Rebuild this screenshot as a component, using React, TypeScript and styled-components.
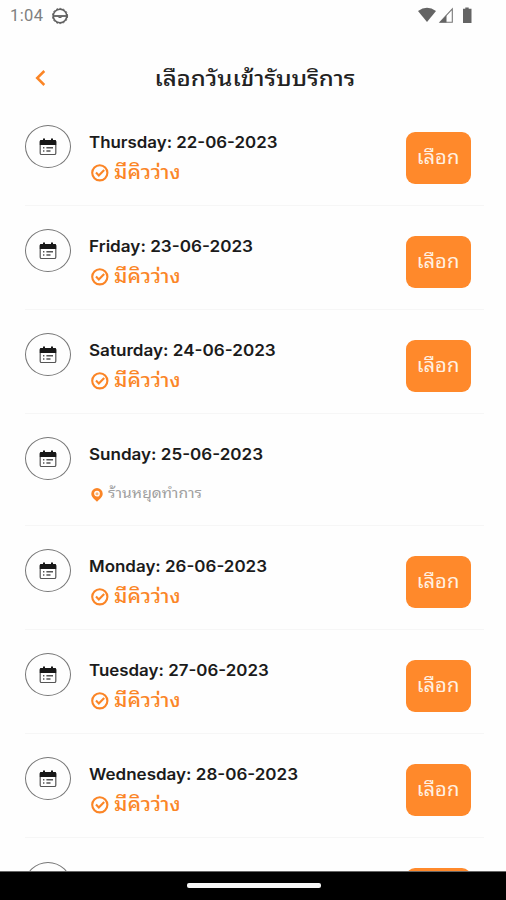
import React from 'react';
import styled, { createGlobalStyle } from 'styled-components';

const thai = 'Inter, "Noto Sans Thai Looped", "Noto Looped Thai", Loma, "Droid Sans Thai", "Noto Sans Thai", "Noto Sans", sans-serif';

const Global = createGlobalStyle`
  * { box-sizing: border-box; }
  body { margin: 0; background: #fefefe; overflow: hidden; }
`;

const Screen = styled.div`
  width: 506px;
  height: 900px;
  display: flex;
  flex-direction: column;
  overflow: hidden;
  background: #fefefe;
  font-family: ${thai};
`;
const StatusBar = styled.div`
  flex: none;
  height: 32px;
  padding: 0 33px 0 10px;
  display: flex;
  align-items: center;
  justify-content: space-between;
`;
const StatusGroup = styled.div`
  display: flex;
  align-items: center;
`;
const Clock = styled.span`
  width: 41px;
  font: 400 16.5px/32px Roboto, sans-serif;
  letter-spacing: 0.4px;
  color: #808080;
`;
const Header = styled.header`
  flex: none;
  height: 69.5px;
  padding: 0 32px;
  display: grid;
  grid-template-columns: 30px 1fr 26px;
  align-items: center;
`;
const BackButton = styled.button`
  height: 24px;
  margin-top: 22px;
  padding: 0;
  border: 0;
  background: none;
  display: flex;
`;
const Title = styled.h1`
  margin: 24px 0 0;
  text-align: center;
  font-size: 20.5px;
  font-weight: 500;
  line-height: 32px;
  color: #222;
  white-space: nowrap;
`;
const Stretch = styled.span<{ $x: number; $origin?: string }>`
  display: inline-block;
  transform: scaleX(${p => p.$x});
  transform-origin: ${p => p.$origin ?? 'left'} center;
  white-space: nowrap;
`;
const List = styled.main`
  flex: 1;
  min-height: 0;
  overflow: hidden;
  padding: 0 22px 0 25px;
`;
const Row = styled.section<{ $closed?: boolean }>`
  height: ${p => (p.$closed ? 112 : 104.1)}px;
  padding: 23.5px 13px 0 0;
  display: flex;
  align-items: flex-start;
  border-bottom: 1px solid #f6f6f6;
`;
const IconRing = styled.div`
  flex: none;
  width: 46px;
  height: 43px;
  border: 1px solid #777;
  border-radius: 50%;
  display: flex;
  align-items: center;
  justify-content: center;
`;
const Details = styled.div`
  flex: 1;
  padding: 5px 0 0 18px;
`;
const DateText = styled.div`
  height: 24px;
  font-size: 16px;
  font-weight: 600;
  line-height: 24px;
  color: #1b1b1b;
  white-space: nowrap;
`;
const Status = styled.div<{ $closed?: boolean }>`
  display: flex;
  align-items: center;
  gap: 5px;
  margin-top: ${p => (p.$closed ? 16 : 6)}px;
  padding-left: 1.5px;
  height: 26px;
  font-size: ${p => (p.$closed ? 14 : 19)}px;
  font-weight: ${p => (p.$closed ? 400 : 500)};
  line-height: 26px;
  color: ${p => (p.$closed ? '#a0a0a0' : '#fb8526')};
`;
const StatusLabel = styled.span<{ $closed?: boolean }>`
  margin-top: ${p => (p.$closed ? -4 : -1)}px;
`;
const SelectButton = styled.button`
  width: 65px;
  height: 52px;
  margin-top: 7px;
  padding: 0;
  border: 0;
  border-radius: 9px;
  background: #ff892b;
  color: #fff1e3;
  font: 400 19px/52px ${thai};
`;
const NavBar = styled.footer`
  flex: none;
  height: 29px;
  border-top: 1px solid #666;
  background: #000;
  display: flex;
  justify-content: center;
  padding: 11px 0 0 1px;
`;
const Handle = styled.div`
  width: 134px;
  height: 5px;
  border-radius: 2px;
  background: #f6f6f6;
`;

const CalendarIcon = () => (
  <svg width="18" height="18" viewBox="0 0 18 18">
    <rect x="1.2" y="2.5" width="15.6" height="14" rx="1.3" fill="#fff" stroke="#555" strokeWidth="1.2" />
    <path d="M.8 7V3.2Q.8 2 2 2H4V.5H6V2H12V.5H14V2H16Q17.2 2 17.2 3.2V7Z" fill="#181818" />
    <path d="M4 9.8H5.4M7.4 9.8H14M4 13H5.4M7.4 13H11.5" stroke="#555" strokeWidth="1.5" />
  </svg>
);
const CheckIcon = () => (
  <svg width="18" height="18" viewBox="0 0 18 18" fill="none" stroke="#fb8526" strokeWidth="2.1">
    <circle cx="8.8" cy="8.8" r="7.6" />
    <path d="M5 8.6 7.8 11.4 13.2 5.9" />
  </svg>
);
const PinIcon = () => (
  <svg width="12" height="14" viewBox="0 0 12 14">
    <path d="M6 0A5.7 5.7 0 0 0 .3 5.7C.3 9 3.4 11 6 13.8 8.6 11 11.7 9 11.7 5.7A5.7 5.7 0 0 0 6 0Z" fill="#fb8526" />
    <circle cx="6" cy="5.7" r="2.2" fill="#fcb273" stroke="#fff" strokeWidth="1.3" />
  </svg>
);

const days = [
  { date: 'Thursday: 22-06-2023', stretch: 1.055 },
  { date: 'Friday: 23-06-2023', stretch: 1.07 },
  { date: 'Saturday: 24-06-2023', stretch: 1.068 },
  { date: 'Sunday: 25-06-2023', stretch: 1.065 },
  { date: 'Monday: 26-06-2023', stretch: 1.06 },
  { date: 'Tuesday: 27-06-2023', stretch: 1.057 },
  { date: 'Wednesday: 28-06-2023', stretch: 1.063 },
].map(day => ({ ...day, closed: day.date.startsWith('Sunday') }));

const NextRow = styled.section`
  height: 34px;
  padding: 23.5px 13px 0 0;
  display: flex;
  justify-content: space-between;
  align-items: flex-start;
`;
const ButtonEdge = styled.div`
  width: 65px;
  height: 52px;
  margin-top: 6px;
  border-radius: 9px;
  background: #ff892b;
`;

export default function App() {
  return (
    <Screen>
      <Global />
      <StatusBar>
        <StatusGroup>
          <Clock>1:04</Clock>
          <svg width="18" height="18" viewBox="0 0 18 18" fill="none" stroke="#606060">
            <circle cx="9" cy="9" r="6.8" strokeWidth="1.6" />
            <circle cx="9" cy="9" r="7.6" strokeWidth="1" strokeDasharray="2 1.5" />
            <path d="M2 9H16" strokeWidth="1.8" />
            <path d="M6.5 9.5Q9 12 11.5 9.5" strokeWidth="1" />
          </svg>
        </StatusGroup>
        <svg width="55" height="18" viewBox="0 0 55 18" fill="#646464">
          <path d="M0 4Q9-2.5 18 4L9 15Z" />
          <path d="M34.3 2V15.2H22Z" fill="#fff" stroke="#777" strokeWidth="1.1" />
          <path d="M28.5 8.3V15.5H21.5Z" />
          <path d="M45 1.7H47.3V.5H50.7V1.7H53.5V16H45V1.7Z" />
        </svg>
      </StatusBar>
      <Header>
        <BackButton aria-label="Back">
          <svg width="16" height="24" viewBox="0 0 16 24" fill="none" stroke="#fb8526" strokeWidth="2.5">
            <path d="M12.3 5 5.2 12 12.3 19" />
          </svg>
        </BackButton>
        <Title><Stretch $x={1.17} $origin="center">เลือกวันเข้ารับบริการ</Stretch></Title>
      </Header>
      <List>
        {days.map(day => (
          <Row key={day.date} $closed={day.closed}>
            <IconRing><CalendarIcon /></IconRing>
            <Details>
              <DateText><Stretch $x={day.stretch}>{day.date}</Stretch></DateText>
              <Status $closed={day.closed}>
                {day.closed ? <PinIcon /> : <CheckIcon />}
                <StatusLabel $closed={day.closed}>
                  <Stretch $x={day.closed ? 1.12 : 1.1}>{day.closed ? 'ร้านหยุดทำการ' : 'มีคิวว่าง'}</Stretch>
                </StatusLabel>
              </Status>
            </Details>
            {!day.closed && <SelectButton><Stretch $x={1.06} $origin="center">เลือก</Stretch></SelectButton>}
          </Row>
        ))}
        <NextRow>
          <IconRing />
          <ButtonEdge />
        </NextRow>
      </List>
      <NavBar><Handle /></NavBar>
    </Screen>
  );
}
